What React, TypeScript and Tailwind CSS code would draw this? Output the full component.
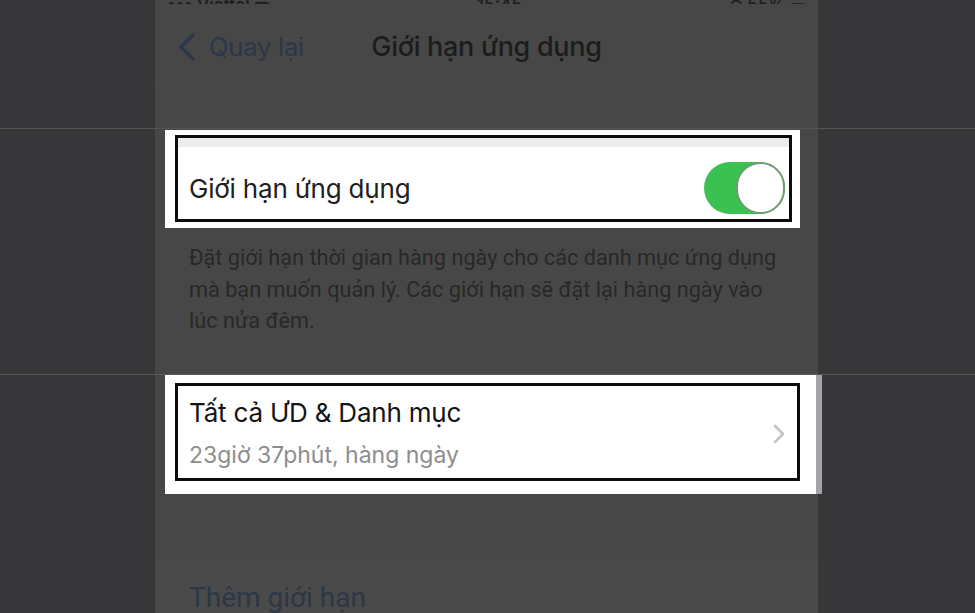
import React from "react";

const SIDE = "bg-[#373739]";
const PANEL = "bg-[#474747]";

function ChevronLeft() {
  return (
    <svg width="19" height="28" viewBox="0 0 19 28" fill="none">
      <path d="M16 2 L4 14 L16 26" stroke="#2b3848" strokeWidth="3.4" strokeLinecap="round" strokeLinejoin="round" />
    </svg>
  );
}

function ChevronRight() {
  return (
    <svg width="12" height="20" viewBox="0 0 12 20" fill="none">
      <path d="M2 2 L10 10 L2 18" stroke="#c4c4c7" strokeWidth="2.6" strokeLinecap="round" strokeLinejoin="round" />
    </svg>
  );
}

function Toggle() {
  return (
    <div className="w-[81px] h-[52px] rounded-full bg-[#3bc152] flex items-center justify-end">
      <div className="w-[49px] h-[52px] rounded-full bg-white border-[2px] border-[#6f9a74]" />
    </div>
  );
}

export default function App() {
  return (
    <div
      className="w-[975px] h-[613px] overflow-hidden flex flex-col bg-[#373739]"
      style={{ fontFamily: "Inter, 'Liberation Sans', sans-serif" }}
    >
      {/* header: status bar + navigation */}
      <div className="flex h-[128px]">
        <div className={`w-[155px] ${SIDE}`} />
        <div className={`w-[663px] ${PANEL} flex flex-col`}>
          <div className="h-[4px] overflow-hidden flex items-end justify-between px-[12px] text-[#1f1f1f] text-[17px] leading-none font-semibold">
            <span className="translate-y-[10px]">••• Viettel ᯤ</span>
            <span className="translate-y-[10px]">15:45</span>
            <span className="translate-y-[10px]">⊙ 55% ▭</span>
          </div>
          <div className="h-[81px] pt-[6px] grid grid-cols-[1fr_auto_1fr] items-center border-b border-[#4b4b4b]">
            <div className="flex items-center pl-[22px] gap-[13px]">
              <ChevronLeft />
              <span className="text-[25.5px] text-[#2b3848] tracking-[-0.2px]">Quay lại</span>
            </div>
            <span className="text-[27px] text-[#1c1c1c] font-medium tracking-[-0.3px]">Giới hạn ứng dụng</span>
            <div />
          </div>
        </div>
        <div className={`flex-1 ${SIDE}`} />
      </div>

      <div className="h-[1px] bg-[#545454]" />

      {/* first highlighted row: toggle */}
      <div className="flex h-[99px]">
        <div className={`w-[155px] ${SIDE}`} />
        <div className={`w-[663px] ${PANEL} pl-[10px] pt-[1px]`}>
          <div className="w-[635px] h-[98px] bg-white pt-[5px] pl-[10px] pr-[8px] pb-[6px]">
            <div className="h-full border-[3px] border-[#0d0d0d] flex flex-col">
              <div className="h-[9px] bg-[#ececee]" />
              <div className="flex-1 flex items-center justify-between pl-[11px] pr-[4px] pt-[10px]">
                <span className="text-[26px] text-[#202020] tracking-[-0.2px]">Giới hạn ứng dụng</span>
                <Toggle />
              </div>
            </div>
          </div>
        </div>
        <div className={`flex-1 ${SIDE}`} />
      </div>

      {/* footnote */}
      <div className="flex h-[146px]">
        <div className={`w-[155px] ${SIDE}`} />
        <div
          className={`w-[663px] ${PANEL} pl-[34px] pt-[14px] text-[21.7px] leading-[31.5px] text-[#282828] whitespace-nowrap`}
          style={{ fontFamily: "Roboto, 'Liberation Sans', sans-serif" }}
        >
          Đặt giới hạn thời gian hàng ngày cho các danh mục ứng dụng
          <br />
          mà bạn muốn quản lý. Các giới hạn sẽ đặt lại hàng ngày vào
          <br />
          lúc nửa đêm.
        </div>
        <div className={`flex-1 ${SIDE}`} />
      </div>

      <div className="h-[1px] bg-[#5a5a5a]" />

      {/* second highlighted row: all apps & categories */}
      <div className="flex h-[119px]">
        <div className={`w-[155px] ${SIDE}`} />
        <div className={`w-[10px] ${PANEL}`} />
        <div className="w-[651px] bg-white pt-[8px] pl-[10px] pr-[16px] pb-[13px]">
          <div className="h-full border-[3px] border-[#0d0d0d] flex items-center justify-between pl-[11px] pr-[12px] pt-[4px]">
            <div className="flex flex-col">
              <span className="text-[26px] leading-[36px] text-[#141414] tracking-[-0.2px]">Tất cả ƯD &amp; Danh mục</span>
              <span className="mt-[6px] text-[23px] leading-[36px] text-[#8d8d8f]">23giờ 37phút, hàng ngày</span>
            </div>
            <ChevronRight />
          </div>
        </div>
        <div className="w-[6px] bg-[#a3a3a8]" />
        <div className={`flex-1 ${SIDE}`} />
      </div>

      {/* lower section */}
      <div className="flex h-[64px]">
        <div className={`w-[155px] ${SIDE}`} />
        <div className={`w-[663px] ${PANEL}`} />
        <div className={`flex-1 ${SIDE}`} />
      </div>
      <div className="flex flex-1">
        <div className={`w-[155px] ${SIDE}`} />
        <div
          className="w-[663px] bg-[#4a4a4a] border-t border-[#444444] pl-[34px] pt-[25px]"
          style={{ fontFamily: "Roboto, 'Liberation Sans', sans-serif" }}
        >
          <span className="block text-[28px] leading-[28px] text-[#2c3847]">Thêm giới hạn</span>
        </div>
        <div className={`flex-1 ${SIDE}`} />
      </div>
    </div>
  );
}
